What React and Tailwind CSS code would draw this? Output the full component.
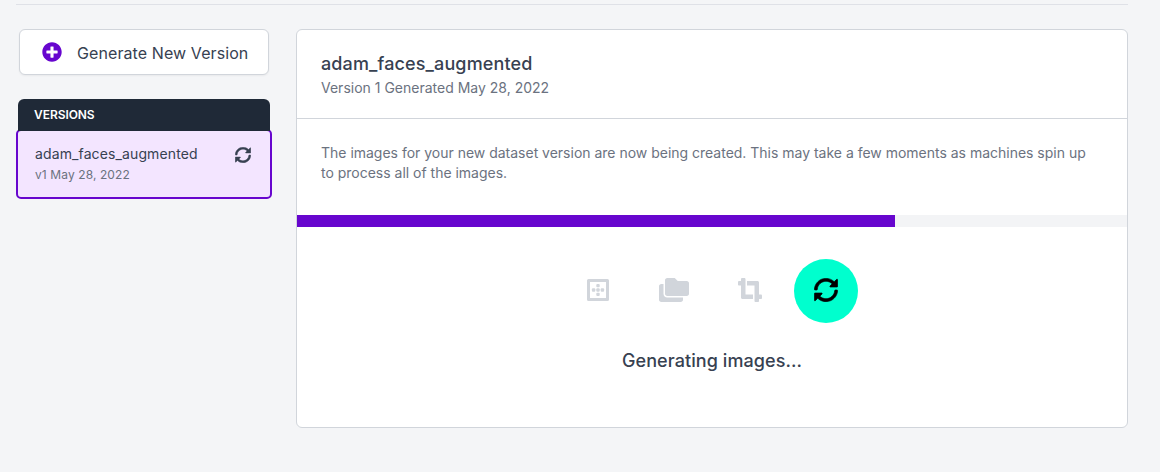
import { FaCropAlt, FaPlusCircle } from "react-icons/fa";

function SyncIcon({ className }) {
  return (
    <svg
      viewBox="0 0 512 512"
      fill="currentColor"
      stroke="currentColor"
      strokeWidth="14"
      strokeLinejoin="round"
      className={className}
    >
      <path d="M483.515 28.485L431.35 80.65C386.475 35.767 324.485 8 256 8 123.228 8 14.824 112.338 8.31 243.493 7.971 250.311 13.475 256 20.301 256h38.045c6.353 0 11.613-4.952 11.973-11.294C76.161 146.649 156.453 70 256 70c50.163 0 97.157 20.923 131.614 54.386l-47.128 47.129c-7.56 7.56-2.206 20.485 8.485 20.485H492c6.627 0 12-5.373 12-12V36.971c0-10.691-12.926-16.045-20.485-8.486z" />
      <path
        d="M483.515 28.485L431.35 80.65C386.475 35.767 324.485 8 256 8 123.228 8 14.824 112.338 8.31 243.493 7.971 250.311 13.475 256 20.301 256h38.045c6.353 0 11.613-4.952 11.973-11.294C76.161 146.649 156.453 70 256 70c50.163 0 97.157 20.923 131.614 54.386l-47.128 47.129c-7.56 7.56-2.206 20.485 8.485 20.485H492c6.627 0 12-5.373 12-12V36.971c0-10.691-12.926-16.045-20.485-8.486z"
        transform="rotate(180 256 256)"
      />
    </svg>
  );
}

function BorderOuterIcon({ className }) {
  return (
    <svg viewBox="0 0 22 22" fill="currentColor" className={className}>
      <path
        fillRule="evenodd"
        d="M20.5 0h-19A1.5 1.5 0 0 0 0 1.5v19A1.5 1.5 0 0 0 1.5 22h19a1.5 1.5 0 0 0 1.5-1.5v-19A1.5 1.5 0 0 0 20.500 0zM19 19H3V3h16z"
      />
      <rect x="9.300" y="4.900" width="3.400" height="3.400" rx="1" />
      <rect x="9.300" y="9.300" width="3.400" height="3.400" rx="1" />
      <rect x="9.300" y="13.700" width="3.400" height="3.400" rx="1" />
      <rect x="4.900" y="9.300" width="3.400" height="3.400" rx="1" />
      <rect x="13.700" y="9.300" width="3.400" height="3.400" rx="1" />
    </svg>
  );
}

function FoldersIcon({ className }) {
  return (
    <svg viewBox="0 0 640 512" fill="currentColor" className={className}>
      <path d="M592 64H400L336 0H176c-26.5 0-48 21.5-48 48v288c0 26.5 21.5 48 48 48h416c26.5 0 48-21.5 48-48V112c0-26.5-21.5-48-48-48zM512 416H176c-44.2 0-80-35.8-80-80V128H48c-26.5 0-48 21.5-48 48v288c0 26.5 21.5 48 48 48h416c26.5 0 48-21.5 48-48v-48z" />
    </svg>
  );
}

function Sidebar() {
  return (
    <aside className="w-64 shrink-0">
      <button className="ml-[3px] flex h-[46px] w-[250px] items-center rounded-md border border-[#d1d5db] bg-white pl-[22px] text-base text-[#374151] shadow-xs">
        <FaPlusCircle className="size-5 text-[#6706ce]" />
        <span className="ml-[15px] pt-0.5 tracking-[0.09px] whitespace-nowrap">Generate New Version</span>
      </button>
      <div className="relative z-10 mt-6 ml-0.5 flex h-8 w-[252px] items-center rounded-t-md bg-[#1f2937] px-4 text-xs font-semibold tracking-[-0.06px] text-white">
        VERSIONS
      </div>
      <div className="-mt-0.5 flex h-[70px] items-start justify-between rounded-[5px] border-2 border-[#6706ce] bg-[#f3e5ff] px-[17px] pt-[13px]">
        <div>
          <div className="text-sm leading-5 tracking-[0.12px] text-[#374151]">adam_faces_augmented</div>
          <div className="mt-px text-xs leading-5 tracking-[0.1px] text-[#6b7280]">v1 May 28, 2022</div>
        </div>
        <SyncIcon className="mt-[3px] mr-0.5 size-4 text-[#374151]" />
      </div>
    </aside>
  );
}

function VersionPanel() {
  return (
    <main className="ml-6 h-[399px] w-[832px] rounded-md border border-[#d1d5db] bg-white">
      <header className="h-[89px] border-b border-[#d1d5db] px-6 pt-5">
        <h1 className="text-lg leading-7 font-medium tracking-[0.13px] text-[#374151]">adam_faces_augmented</h1>
        <p className="text-sm leading-5 text-[#6b7280]">Version 1 Generated May 28, 2022</p>
      </header>
      <p className="h-24 px-6 pt-6 text-sm leading-5 tracking-[-0.01px] text-[#6b7280]">
        The images for your new dataset version are now being created. This may take a few moments as
        machines spin up
        <br />
        to process all of the images.
      </p>
      <div className="h-3 bg-[#f3f4f6]">
        <div className="h-full w-[598px] bg-[#6706ce]" />
      </div>
      <div className="mt-8 flex justify-center gap-3 text-[#d1d5db]">
        <div className="flex size-16 items-center justify-center pb-0.5">
          <BorderOuterIcon className="size-[22px]" />
        </div>
        <div className="flex size-16 items-center justify-center pb-0.5">
          <FoldersIcon className="h-6 w-[30px]" />
        </div>
        <div className="flex size-16 items-center justify-center pb-0.5">
          <FaCropAlt className="size-6" />
        </div>
        <div className="flex size-16 items-center justify-center rounded-full bg-[#00ffce] pb-0.5 text-black">
          <SyncIcon className="size-6" />
        </div>
      </div>
      <p className="mt-6 text-center text-lg leading-7 font-medium tracking-[0.08px] text-[#374151]">
        Generating images...
      </p>
    </main>
  );
}

export default function App() {
  return (
    <div className="h-[472px] bg-[#f4f5f7] pt-1 pl-4 font-['Inter',sans-serif]">
      <div className="h-px w-[1112px] bg-[#dfe1e7]" />
      <div className="mt-6 flex">
        <Sidebar />
        <VersionPanel />
      </div>
    </div>
  );
}
